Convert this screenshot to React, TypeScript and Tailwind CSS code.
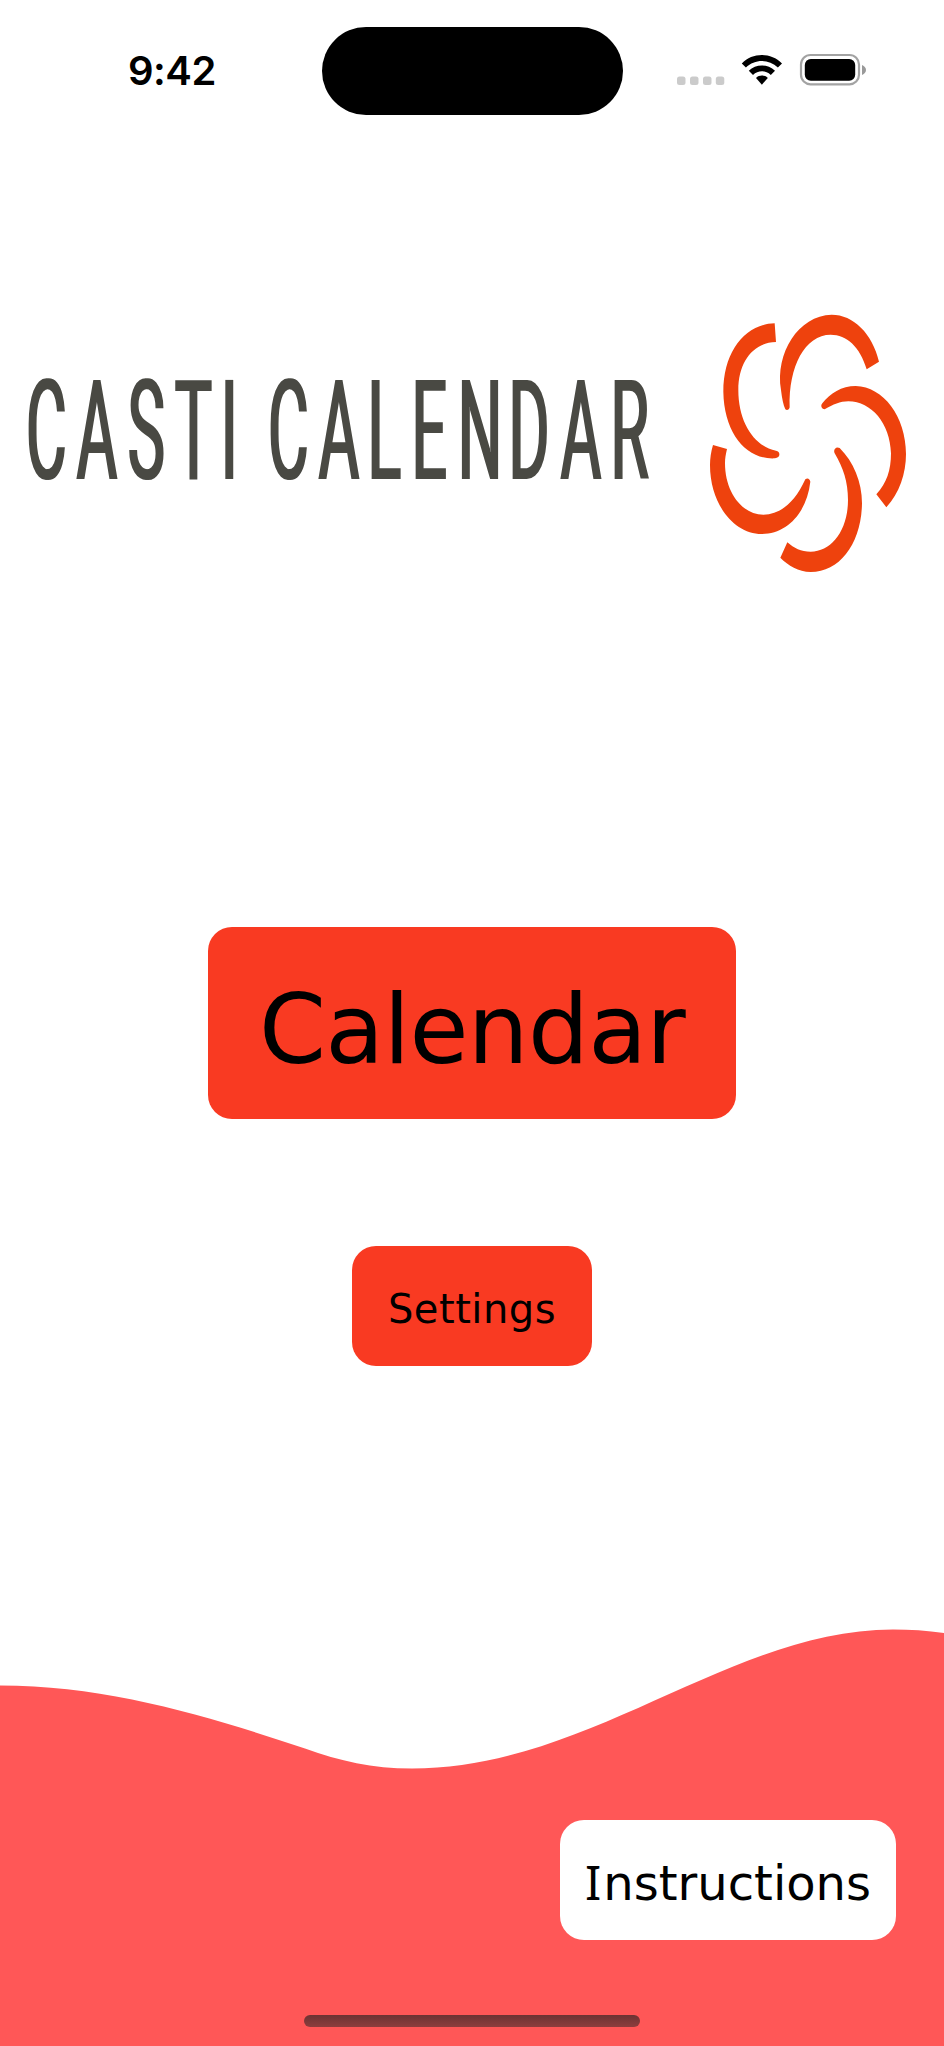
const TITLE_X = [26, 76.5, 127.7, 174.8, 220.7, 250, 268, 318.5, 367.5, 411.5, 457.7, 508.5, 560.5, 610.5];
const TITLE_SCALE = 0.45;

function StatusBar() {
  return (
    <header className="flex h-[142px] items-start pt-[27px]">
      <div className="flex h-[88px] w-[321.5px] items-center pl-[128px]">
        <span className="font-['Inter',sans-serif] text-[40px] leading-none font-semibold tracking-[-0.5px] text-black">9:42</span>
      </div>
      <div className="h-[88px] w-[301px] rounded-full bg-black" />
      <svg className="h-[88px] w-[321px]" viewBox="623 27 321 88" aria-hidden="true">
        <g fill="#cbcbcb">
          <rect x="677" y="76.5" width="8.5" height="8.5" rx="2.5" />
          <rect x="690" y="76.5" width="8.5" height="8.5" rx="2.5" />
          <rect x="703" y="76.5" width="8.5" height="8.5" rx="2.5" />
          <rect x="715.8" y="76.5" width="8.5" height="8.5" rx="2.5" />
        </g>
        <path d="M741.8 63.5 C752.5 52.2 771.2 52.2 782 63.5 L777.9 67.6 C769 58.7 754.8 58.7 745.9 67.6Z" />
        <path d="M748.8 70.8 C755.8 63.6 768 63.6 775 70.8 L770.8 75 C765.8 70.1 758 70.1 753 75Z" />
        <path d="M756 78 C759.2 74.8 764.6 74.8 767.8 78 L761.9 84.7Z" />
        <rect x="801" y="55" width="58" height="29.3" rx="9.5" fill="none" stroke="#a3a3a3" strokeWidth="2.2" />
        <rect x="804.8" y="59" width="50.4" height="21.8" rx="6" />
        <path d="M862 65 Q866 67 866 70 Q866 73 862 75Z" fill="#999" />
      </svg>
    </header>
  );
}

function Logo() {
  return (
    <div className="flex h-[290px]">
      <svg className="h-[290px] w-[690px]" viewBox="0 300 690 290">
        <filter id="widen" filterUnits="userSpaceOnUse" x="0" y="300" width="690" height="290" colorInterpolationFilters="sRGB">
          <feMorphology operator="dilate" radius="1 0" />
        </filter>
        <g filter="url(#widen)">
          <text
            transform={`scale(${TITLE_SCALE} 1)`}
            x={TITLE_X.map((x) => x / TITLE_SCALE).join(" ")}
            y="479.2"
            className="fill-[#494943] font-['Roboto',sans-serif] text-[139px] font-normal"
          >
            CASTI CALENDAR
          </text>
        </g>
      </svg>
      <svg className="h-[290px] w-[230px]" viewBox="0 0 690 870" fill="#ee420d" aria-hidden="true">
        <path d="M254 70C165 72 100 155 100 275C102 400 170 480 255 475C264 474 269 469 268 462C268 457 265 454 258 452C195 440 145 370 145 270C145 185 190 127 258 126Z" />
        <path d="M286 328C291 333 298 329 299 322C295 200 345 104 422 104C470 104 510 140 530 208L567 185C547 100 490 44 425 44C325 46 255 160 273 270C276 295 280 315 286 328Z" />
        <path d="M404 328C396 328 390 318 397 310C420 280 455 258 497 258C580 260 648 350 648 462C648 520 628 580 589 622L559 583C590 550 603 510 603 460C600 370 545 305 475 304C450 304 430 313 404 328Z" />
        <path d="M434 460C429 450 437 438 449 444C490 485 516 545 516 610C514 730 450 816 362 816C325 815 295 797 271 773L292 727C312 745 333 755 362 755C425 755 474 690 474 600C474 545 460 505 434 460Z" />
        <path d="M346 538C352 532 360 536 361 545C350 640 290 702 215 702C130 702 60 610 60 495C60 475 63 455 69 435L111 447C107 465 105 475 105 490C105 575 155 644 220 644C275 643 315 605 346 538Z" />
      </svg>
    </div>
  );
}

export default function App() {
  return (
    <div className="flex h-[2046px] w-[944px] flex-col overflow-hidden bg-white font-['DejaVu_Sans',sans-serif] text-black">
      <StatusBar />
      <main className="flex flex-1 flex-col pt-[158px]">
        <Logo />
        <div className="flex flex-col items-center pt-[337px]">
          <button className="flex h-[192px] w-[528px] items-center justify-center rounded-3xl bg-[#f93a22] pt-[13px] text-[96px] leading-none tracking-[-0.7px]">
            Calendar
          </button>
          <button className="mt-[127px] flex h-[120px] w-[240px] items-center justify-center rounded-3xl bg-[#f93a22] pt-[5px] text-[40px] leading-none tracking-[0.5px]">
            Settings
          </button>
        </div>
      </main>
      <footer className="flex h-[418px] flex-col">
        <svg className="h-[142px] w-full shrink-0" viewBox="0 1628 944 142" aria-hidden="true">
          <path
            fill="#ff5757"
            d="M0 1685.5C110 1685.5 210 1717 305 1748.5C340 1761 372 1768.5 412 1768.5C590 1768.5 730 1629.5 893 1629.5C910 1629.5 927 1630.5 944 1633V1770H0Z"
          />
        </svg>
        <div className="flex flex-1 flex-col bg-[#ff5757] pt-[50px]">
          <button className="ml-[560px] flex h-[120px] w-[336px] items-center justify-center rounded-3xl bg-white pt-[5px] text-[48px] leading-none">
            <span className="whitespace-nowrap">
              <span className="font-['Noto_Sans',sans-serif] tracking-[2px]">I</span>nstructions
            </span>
          </button>
          <div className="mt-[75px] ml-[304px] h-3 w-[336px] rounded-full bg-gradient-to-b from-[#6d3333] to-[#8d3d3d]" />
        </div>
      </footer>
    </div>
  );
}
